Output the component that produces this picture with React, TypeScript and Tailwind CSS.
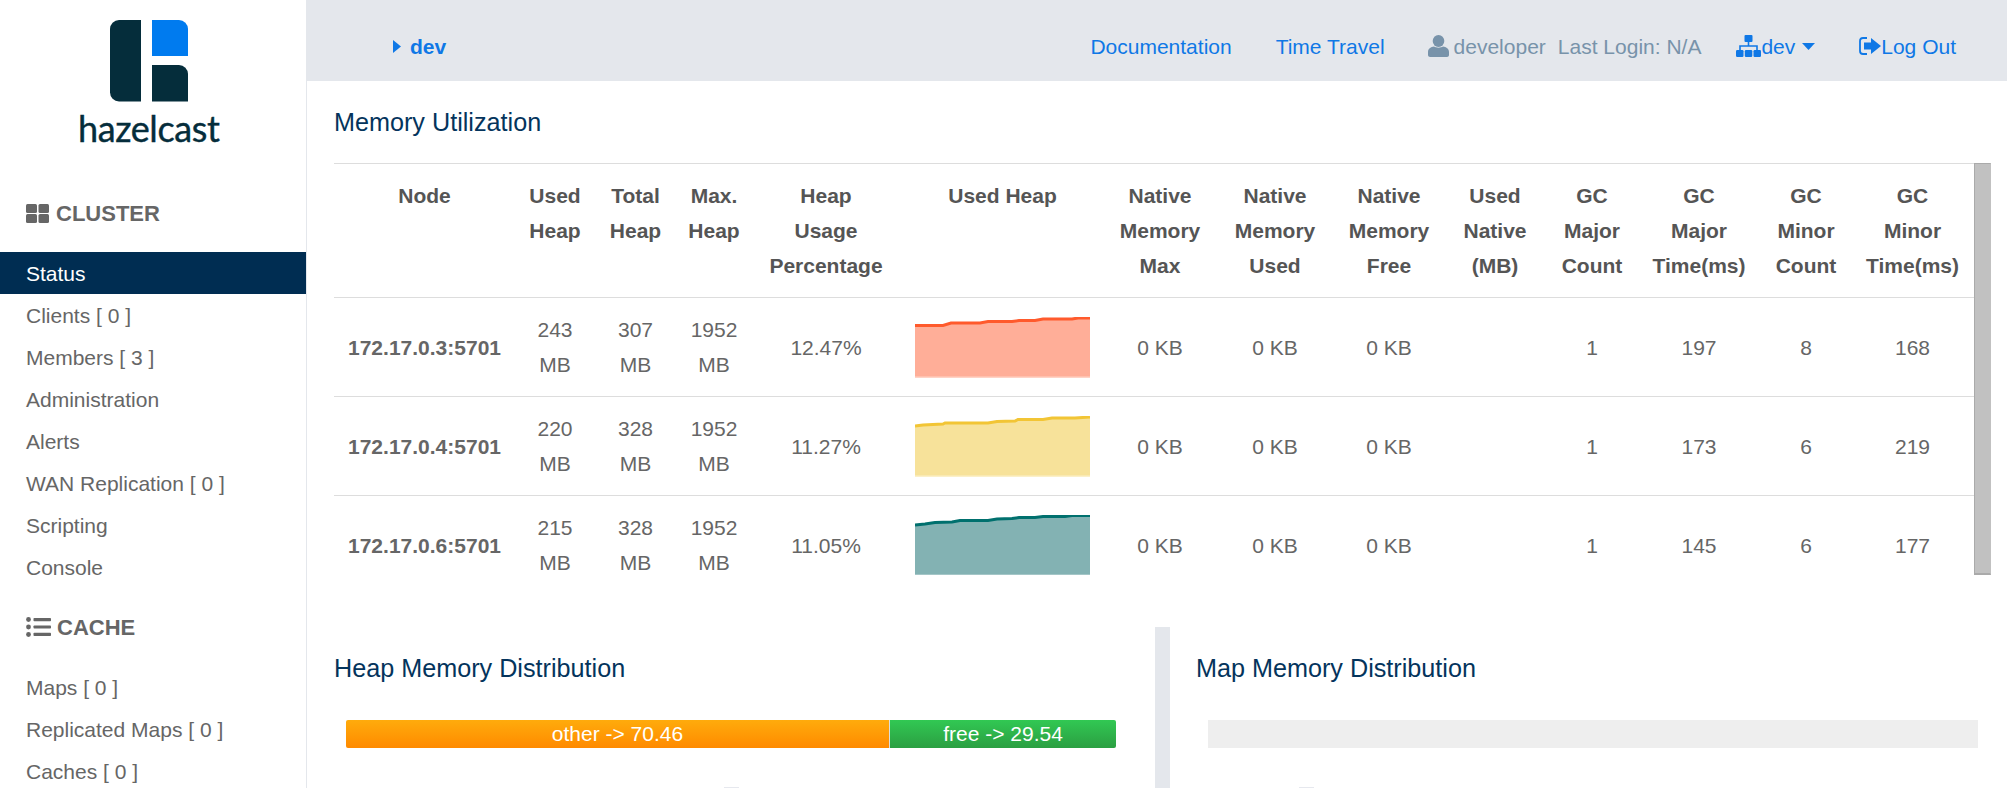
const clusterItems = ["Clients [ 0 ]", "Members [ 3 ]", "Administration", "Alerts", "WAN Replication [ 0 ]", "Scripting", "Console"];
const cacheItems = ["Maps [ 0 ]", "Replicated Maps [ 0 ]", "Caches [ 0 ]"];

const colWidths = [181, 80, 81, 76, 148, 205, 110, 120, 108, 104, 90, 124, 90, 123];
const columns = [
  ["Node"],
  ["Used", "Heap"],
  ["Total", "Heap"],
  ["Max.", "Heap"],
  ["Heap", "Usage", "Percentage"],
  ["Used Heap"],
  ["Native", "Memory", "Max"],
  ["Native", "Memory", "Used"],
  ["Native", "Memory", "Free"],
  ["Used", "Native", "(MB)"],
  ["GC", "Major", "Count"],
  ["GC", "Major", "Time(ms)"],
  ["GC", "Minor", "Count"],
  ["GC", "Minor", "Time(ms)"],
];

const rows = [
  {
    node: "172.17.0.3:5701", used: "243", total: "307", pct: "12.47%", gc: ["1", "197", "8", "168"],
    stroke: "#ff5a2c", fill: "#ffae98", edge: "#ffd3c6",
    pts: "0,8.5 28,8.5 36,6 65,6 73,4.5 97,4.5 104,3.5 120,3.5 128,2 157,2 163,1 175,1",
  },
  {
    node: "172.17.0.4:5701", used: "220", total: "328", pct: "11.27%", gc: ["1", "173", "6", "219"],
    stroke: "#f2c535", fill: "#f7e29a", edge: "#fbf0c9",
    pts: "0,10 8,9 28,8 30,7 73,7 82,5.5 100,5 103,3.5 128,3.5 137,2 160,2 175,1",
  },
  {
    node: "172.17.0.6:5701", used: "215", total: "328", pct: "11.05%", gc: ["1", "145", "6", "177"],
    stroke: "#00706e", fill: "#83b2b3", edge: "#c4dada",
    pts: "0,10 10,9 20,7.5 37,7 45,5.5 73,5.5 82,4 97,3.5 104,2.5 120,2.5 128,1.5 150,1.5 157,0.5 175,0.5",
  },
];

function Spark({ pts, stroke, fill, edge }: { pts: string; stroke: string; fill: string; edge: string }) {
  return (
    <svg width="175" height="61" viewBox="0 0 175 61" className="mx-auto block">
      <polygon points={`0,60 ${pts} 175,60`} fill={fill} />
      <rect x="0" y="59.5" width="175" height="1.5" fill={edge} />
      <polyline points={pts} fill="none" stroke={stroke} strokeWidth="3" />
    </svg>
  );
}

function Logo() {
  return (
    <svg width="78" height="82" viewBox="0 0 78 82" className="block">
      <path d="M9 0H31V81.5H9A9 9 0 0 1 0 72.500V9A9 9 0 0 1 9 0Z" fill="#052d3b" />
      <path d="M42 0H69A9 9 0 0 1 78 9V36H42Z" fill="#007bef" />
      <path d="M42 45H69A9 9 0 0 1 78 54V81.500H42Z" fill="#052d3b" />
    </svg>
  );
}

function ThLarge() {
  return (
    <svg width="23" height="19" viewBox="0 0 23 19" className="mr-[7px] shrink-0">
      <rect x="0" y="0" width="11" height="9" rx="1.500" fill="#666" />
      <rect x="12.500" y="0" width="10.500" height="9" rx="1.500" fill="#666" />
      <rect x="0" y="10" width="11" height="9" rx="1.500" fill="#666" />
      <rect x="12.500" y="10" width="10.500" height="9" rx="1.500" fill="#666" />
    </svg>
  );
}

function ListIcon() {
  return (
    <svg width="25" height="20" viewBox="0 0 25 20" className="mr-[6px] shrink-0">
      <circle cx="2.500" cy="2.500" r="2.400" fill="#666" />
      <circle cx="2.500" cy="10" r="2.400" fill="#666" />
      <circle cx="2.500" cy="17.500" r="2.400" fill="#666" />
      <rect x="7.500" y="1" width="17.500" height="3.200" rx="0.800" fill="#666" />
      <rect x="7.500" y="8.400" width="17.500" height="3.200" rx="0.800" fill="#666" />
      <rect x="7.500" y="15.800" width="17.500" height="3.200" rx="0.800" fill="#666" />
    </svg>
  );
}

function UserIcon() {
  return (
    <svg width="21" height="22" viewBox="0 0 21 22" className="shrink-0">
      <ellipse cx="10.500" cy="6" rx="5.800" ry="6" fill="#7893aa" />
      <path d="M0 17C0 13.500 3 12 6 11.500C8 13 13 13 15 11.500C18 12 21 13.500 21 17V20C21 21.200 20 22 19 22H2C1 22 0 21.200 0 20Z" fill="#7893aa" />
    </svg>
  );
}

function SitemapIcon() {
  return (
    <svg width="25" height="22" viewBox="0 0 25 22" className="shrink-0">
      <rect x="8.500" y="0" width="8" height="7" rx="1" fill="#0f78e6" />
      <path d="M12.500 6V11M4 16V11H21V16" fill="none" stroke="#0f78e6" strokeWidth="1.600" />
      <rect x="0" y="15" width="7.500" height="7" rx="1.200" fill="#0f78e6" />
      <rect x="8.800" y="15" width="7.500" height="7" rx="1.200" fill="#0f78e6" />
      <rect x="17.500" y="15" width="7.500" height="7" rx="1.200" fill="#0f78e6" />
    </svg>
  );
}

function LogoutIcon() {
  return (
    <svg width="22" height="18" viewBox="0 0 22 18" className="shrink-0">
      <path d="M8 1H4A3 3 0 0 0 1 4V14A3 3 0 0 0 4 17H8" fill="none" stroke="#0f78e6" strokeWidth="1.800" />
      <path d="M5 5.500H12V1L22 9L12 17V12.500H5Z" fill="#0f78e6" />
    </svg>
  );
}

function Caret({ dir }: { dir: "right" | "down" }) {
  return dir === "right" ? (
    <svg width="8" height="13" viewBox="0 0 8 13" className="shrink-0">
      <path d="M0 0L8 6.500L0 13Z" fill="#0f78e6" />
    </svg>
  ) : (
    <svg width="13" height="7" viewBox="0 0 13 7" className="shrink-0">
      <path d="M0 0H13L6.500 7Z" fill="#0f78e6" />
    </svg>
  );
}

function SectionHead({ children, label }: { children: React.ReactNode; label: string }) {
  return (
    <div className="flex h-[78px] items-center pl-[26px] text-[22px] font-bold text-[#666]">
      {children}
      <span>{label}</span>
    </div>
  );
}

function NavItem({ label, active }: { label: string; active?: boolean }) {
  return (
    <div className={active ? "flex h-[42px] items-center bg-[#002d52] pl-[26px] text-white" : "flex h-[42px] items-center pl-[26px] text-[#666]"}>
      {label}
    </div>
  );
}

export default function App() {
  return (
    <div className="flex h-[788px] w-[2007px] overflow-hidden bg-white font-['Liberation_Sans',Arial,sans-serif] text-[21px] leading-[35px] text-[#666]">
      <aside className="w-[306px] shrink-0">
        <div className="flex h-[174px] flex-col items-start pl-[110px] pt-[20px]">
          <Logo />
          <span className="-ml-[32px] mt-[5px] font-['Lato',sans-serif] text-[36px] leading-[42px] tracking-[-0.4px] text-[#052d3b] [-webkit-text-stroke:0.4px_#052d3b]">hazelcast</span>
        </div>
        <SectionHead label="CLUSTER"><ThLarge /></SectionHead>
        <NavItem label="Status" active />
        {clusterItems.map((i) => <NavItem key={i} label={i} />)}
        <SectionHead label="CACHE"><ListIcon /></SectionHead>
        {cacheItems.map((i) => <NavItem key={i} label={i} />)}
      </aside>

      <main className="flex min-w-0 flex-1 flex-col">
        <header className="flex h-[81px] shrink-0 items-center bg-[#e4e7ec] pl-[87px] pr-[51px] pt-[11px] text-[#0f78e6]">
          <Caret dir="right" />
          <span className="ml-[9px] mr-auto font-bold">dev</span>
          <span>Documentation</span>
          <span className="ml-[44px]">Time Travel</span>
          <span className="ml-[43px]"><UserIcon /></span>
          <span className="ml-[5px] text-[#7893aa]">developer</span>
          <span className="ml-[12px] text-[#7893aa]">Last Login: N/A</span>
          <span className="ml-[35px]"><SitemapIcon /></span>
          <span>dev</span>
          <span className="ml-[7px]"><Caret dir="down" /></span>
          <span className="ml-[44px]"><LogoutIcon /></span>
          <span>Log Out</span>
        </header>

        <div className="flex min-h-0 flex-1 flex-col border-l border-[#e4e7ec]">
          <div className="flex h-[82px] shrink-0 items-center pl-[27px] text-[25.2px] text-[#04345c]">Memory Utilization</div>

          <div className="ml-[27px] flex h-[412px] w-[1657px] shrink-0">
            <div className="w-[1640px] overflow-hidden">
              <table className="w-[1640px] table-fixed border-separate border-spacing-0 text-center">
                <colgroup>
                  {colWidths.map((w, i) => (
                    <col key={i} style={{ width: w }} />
                  ))}
                </colgroup>
                <thead>
                  <tr>
                    {columns.map((c, i) => (
                      <th key={i} className="h-[134px] border-t border-[#ddd] p-0 pt-[14px] align-top font-bold text-[#555]">
                        {c.map((l) => <div key={l}>{l}</div>)}
                      </th>
                    ))}
                  </tr>
                </thead>
                <tbody>
                  {rows.map((r) => (
                    <tr key={r.node}>
                      <td className="h-[99px] border-t border-[#ddd] p-0 font-bold">{r.node}</td>
                      <td className="border-t border-[#ddd] p-0">{r.used}<br />MB</td>
                      <td className="border-t border-[#ddd] p-0">{r.total}<br />MB</td>
                      <td className="border-t border-[#ddd] p-0">1952<br />MB</td>
                      <td className="border-t border-[#ddd] p-0">{r.pct}</td>
                      <td className="border-t border-[#ddd] p-0"><Spark pts={r.pts} stroke={r.stroke} fill={r.fill} edge={r.edge} /></td>
                      <td className="border-t border-[#ddd] p-0">0 KB</td>
                      <td className="border-t border-[#ddd] p-0">0 KB</td>
                      <td className="border-t border-[#ddd] p-0">0 KB</td>
                      <td className="border-t border-[#ddd] p-0"></td>
                      {r.gc.map((g, i) => <td key={i} className="border-t border-[#ddd] p-0">{g}</td>)}
                    </tr>
                  ))}
                </tbody>
              </table>
            </div>
            <div className="w-[17px] border-x border-b-2 border-t border-[#aaa] border-r-[#c1c1c1] bg-[#c1c1c1]" />
          </div>

          <div className="mt-[52px] flex min-h-0 flex-1">
            <section className="w-[848px] shrink-0">
              <div className="flex h-[93px] items-center pb-[10px] pl-[27px] text-[25.2px] text-[#04345c]">Heap Memory Distribution</div>
              <div className="ml-[39px] flex h-[28px] w-[770px] overflow-hidden rounded-[2px] text-white">
                <div className="flex w-[543px] items-center justify-center bg-gradient-to-b from-[#ffab0c] to-[#ff8a00] leading-[28px]">other -&gt; 70.46</div>
                <div className="flex flex-1 items-center justify-center border-l border-[#ddd] bg-gradient-to-b from-[#31c853] to-[#2b9f42] leading-[28px]">free -&gt; 29.54</div>
              </div>
              <div className="ml-[417px] mt-[39px] h-[1px] w-[15px] bg-[#e6e8ee]" />
            </section>
            <div className="w-[15px] shrink-0 bg-[#e4e7ec]" />
            <section className="min-w-0 flex-1">
              <div className="flex h-[93px] items-center pb-[10px] pl-[26px] text-[25.2px] text-[#04345c]">Map Memory Distribution</div>
              <div className="ml-[38px] h-[28px] w-[770px] bg-[#eee]" />
              <div className="ml-[129px] mt-[39px] h-[1px] w-[15px] bg-[#e6e8ee]" />
            </section>
          </div>
        </div>
      </main>
    </div>
  );
}
